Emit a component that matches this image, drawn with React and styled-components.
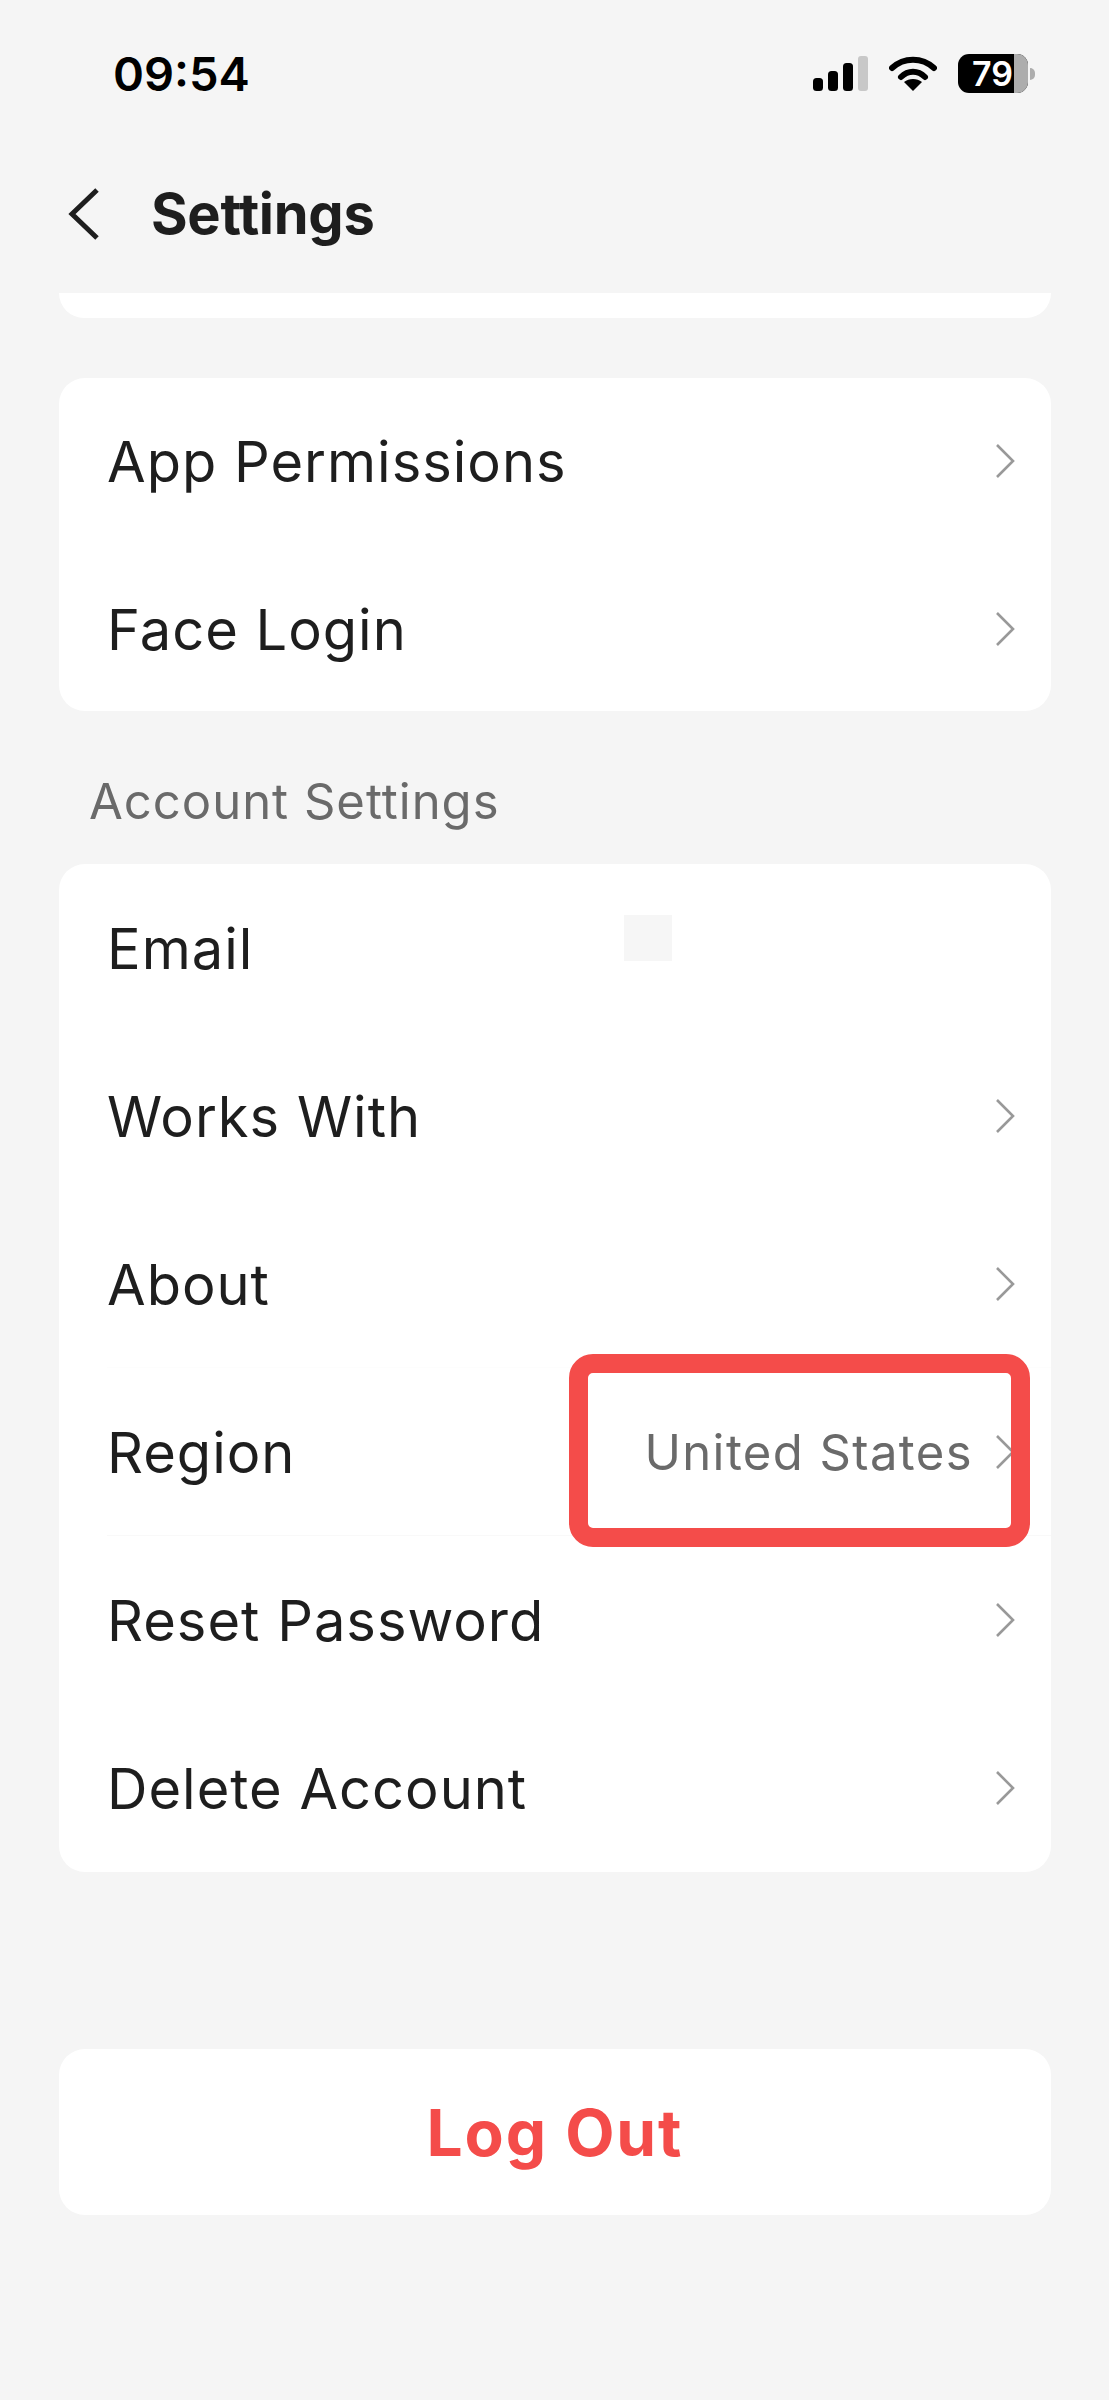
import React from "react";
import styled, { createGlobalStyle } from "styled-components";

const GlobalStyle = createGlobalStyle`
  html, body {
    margin: 0;
    padding: 0;
    background: #f5f5f5;
  }
  * {
    box-sizing: border-box;
  }
`;

const Page = styled.div`
  width: 1109px;
  height: 2400px;
  overflow: hidden;
  background: #f5f5f5;
  font-family: Inter, "Liberation Sans", sans-serif;
  color: #1e1e1e;
  position: relative;
`;
const StatusBar = styled.div`
  height: 150px;
  padding: 50px 74px 0 113px;
  display: flex;
  justify-content: space-between;
  align-items: flex-start;
`;
const Time = styled.div`
  font-size: 47px;
  line-height: 48px;
  font-weight: 600;
  color: #000;
`;
const StatusIcons = styled.div`
  display: flex;
  align-items: center;
  gap: 21px;
  height: 39px;
  margin-top: 4px;
`;
const BatteryWrap = styled.div`
  display: flex;
  align-items: center;
  gap: 2px;
`;
const Battery = styled.div`
  position: relative;
  width: 70px;
  height: 39px;
  border-radius: 11px;
  overflow: hidden;
  background: #000;
  color: #fff;
  font-size: 34px;
  line-height: 39px;
  font-weight: 600;
  padding-left: 14px;

  &::after {
    content: "";
    position: absolute;
    top: 0;
    right: 0;
    bottom: 0;
    width: 14px;
    background: #adadad;
  }
`;
const BatteryCap = styled.div`
  width: 5px;
  height: 12px;
  background: #adadad;
  border-radius: 0 5px 5px 0;
`;
const Header = styled.div`
  height: 143px;
  padding: 0 0 0 68px;
  display: flex;
  align-items: flex-start;
  gap: 51px;
`;
const BackIcon = styled.svg`
  width: 32px;
  height: 52px;
  margin-top: 38px;
`;
const Title = styled.h1`
  margin: 34px 0 0;
  font-size: 56px;
  line-height: 60px;
  font-weight: 700;
  letter-spacing: -0.3px;
  color: #1e1e1e;
`;
const Card = styled.div`
  margin: 0 58px 0 59px;
  background: #fff;
  border-radius: 26px;
`;
const ClippedCard = styled(Card)`
  height: 25px;
  border-radius: 0 0 26px 26px;
  margin-bottom: 60px;
`;
const CompactCard = styled(Card)`
  height: 333px;
  display: flex;
  flex-direction: column;
  justify-content: center;
`;
const SectionLabel = styled.div`
  height: 153px;
  padding: 66px 0 0 89px;
  font-size: 49px;
  line-height: 50px;
  letter-spacing: 1px;
  color: #6a6a6a;
`;
const Row = styled.div`
  height: 168px;
  flex-shrink: 0;
  margin-left: 48px;
  padding-right: 34px;
  display: flex;
  align-items: center;
  justify-content: space-between;
  border-bottom: ${(p) => (p.$line ? `1px solid ${p.$line}` : "none")};
`;
const RowLabel = styled.div`
  font-size: 56px;
  line-height: 60px;
  letter-spacing: 1px;
  padding-top: 2px;
  color: #1e1e1e;
`;
const RowRight = styled.div`
  display: flex;
  align-items: center;
  gap: 22px;
`;
const RowValue = styled.div`
  font-size: 49px;
  line-height: 50px;
  letter-spacing: 1.4px;
  padding-top: 2px;
  color: #6a6a6a;
`;
const Chevron = styled.svg`
  width: 22px;
  height: 36px;
  display: block;
`;
const EmailPatch = styled.div`
  position: absolute;
  left: 624px;
  top: 915px;
  width: 48px;
  height: 46px;
  background: #f6f6f6;
`;
const Highlight = styled.div`
  position: absolute;
  left: 569px;
  top: 1354px;
  width: 461px;
  height: 193px;
  border: 19px solid #f44c4a;
  border-radius: 24px;
  pointer-events: none;
`;
const LogOut = styled(Card)`
  margin-top: 177px;
  height: 166px;
  display: flex;
  align-items: center;
  justify-content: center;
  font-size: 64px;
  font-weight: 700;
  letter-spacing: 1.9px;
  color: #f44c4a;
`;

function RowChevron() {
  return (
    <Chevron viewBox="0 0 22 36" fill="none" stroke="#999" strokeWidth="2.6">
      <path d="M2 2 L18 18 L2 34" />
    </Chevron>
  );
}

function SettingRow({ label, value, noChevron, line }) {
  return (
    <Row $line={line}>
      <RowLabel>{label}</RowLabel>
      <RowRight>
        {value && <RowValue>{value}</RowValue>}
        {!noChevron && <RowChevron />}
      </RowRight>
    </Row>
  );
}

export default function App() {
  return (
    <Page>
      <GlobalStyle />
      <StatusBar>
        <Time>09:54</Time>
        <StatusIcons>
          <svg width="55" height="35" viewBox="0 0 55 35">
            <rect x="0" y="22" width="10" height="13" rx="3.5" fill="#000" />
            <rect x="15" y="15" width="10" height="20" rx="3.5" fill="#000" />
            <rect x="30" y="7" width="10" height="28" rx="3.5" fill="#000" />
            <rect x="45" y="0" width="10" height="35" rx="3" fill="#c8c8c8" />
          </svg>
          <svg width="48" height="35" viewBox="0 0 48 35">
            <path d="M3 12 C15 1 33 1 45 12" fill="none" stroke="#000" strokeWidth="6" strokeLinecap="round" />
            <path d="M12 21 C19 14 29 14 36 21" fill="none" stroke="#000" strokeWidth="6" strokeLinecap="round" />
            <path d="M24 35 L15 26 C20 22 28 22 33 26 Z" fill="#000" />
          </svg>
          <BatteryWrap>
            <Battery>79</Battery>
            <BatteryCap />
          </BatteryWrap>
        </StatusIcons>
      </StatusBar>
      <Header>
        <BackIcon viewBox="0 0 32 52" fill="none" stroke="#1e1e1e" strokeWidth="5">
          <path d="M29 2 L4 26 L29 50" />
        </BackIcon>
        <Title>Settings</Title>
      </Header>
      <ClippedCard />
      <CompactCard>
        <SettingRow label="App Permissions" />
        <SettingRow label="Face Login" />
      </CompactCard>
      <SectionLabel>Account Settings</SectionLabel>
      <Card>
        <SettingRow label="Email" noChevron />
        <SettingRow label="Works With" />
        <SettingRow label="About" line="#fdfdfd" />
        <SettingRow label="Region" value="United States" line="#f9f9f9" />
        <SettingRow label="Reset Password" />
        <SettingRow label="Delete Account" />
      </Card>
      <LogOut>Log Out</LogOut>
      <EmailPatch />
      <Highlight />
    </Page>
  );
}
